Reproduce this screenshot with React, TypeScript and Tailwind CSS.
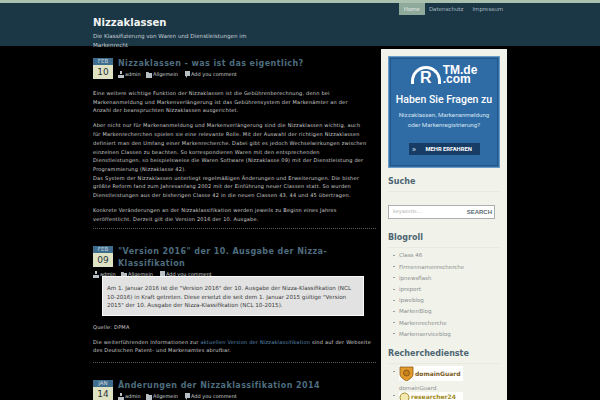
const dv = { fontFamily: '"DejaVu Sans", sans-serif' };

function DateBadge({ month, day }: { month: string; day: string }) {
  return (
    <div className="w-[20px] shrink-0 text-center">
      <div className="h-[7px] bg-[#3f6d8e] text-[5.500px] leading-[7px] text-[#c9d6df]">{month}</div>
      <div className="h-[14px] bg-[#dfe3c4] text-[9px] leading-[14px] text-[#27333a]">{day}</div>
    </div>
  );
}

function Glyph({ kind }: { kind: "user" | "folder" | "comment" }) {
  return (
    <svg width="6" height="7" viewBox="0 0 6 7" className="shrink-0" fill="#b9c0c4">
      {kind === "user" && <path d="M2 0h2v3H2zM0 4h6v3H0z" />}
      {kind === "folder" && <path d="M0 1h2.500l.5 1h3v5H0z" />}
      {kind === "comment" && <path d="M1 0h5v5H3v2L1.500 5H1z" />}
    </svg>
  );
}

function Meta({ className = "" }: { className?: string }) {
  return (
    <div className={`flex items-center text-[5px] leading-[7px] text-[#cfd4d6] ${className}`}>
      <Glyph kind="user" />
      <span className="ml-[1px] w-[21px]">admin</span>
      <Glyph kind="folder" />
      <span className="ml-[1px] w-[31px]">Allgemein</span>
      <Glyph kind="comment" />
      <span className="ml-[1px]">Add you comment</span>
    </div>
  );
}

function P({ children, className = "" }: { children: React.ReactNode; className?: string }) {
  return <p className={`whitespace-nowrap text-[5px] leading-[8.700px] tracking-[0.22px] text-[#cfcfcf] ${className}`}>{children}</p>;
}

function Title({ children }: { children: React.ReactNode }) {
  return <h2 className="text-[8px] font-bold leading-[12px] tracking-[0.42px] text-[#4d6c7e]">{children}</h2>;
}

function Separator() {
  return <div className="border-b border-dotted border-[#5a5a5a]" />;
}

const blogroll = ["Class 46", "Firmennamenrecherche", "ipnewsflash", "ipreport", "ipweblog", "MarkenBlog", "Markenrecherche", "Markenserviceblog"];

function SideHead({ children }: { children: React.ReactNode }) {
  return <h3 className="border-b border-[#e9eae2] pb-[4px] text-[8px] font-bold leading-[10px] text-[#4d6572]">{children}</h3>;
}

export default function App() {
  return (
    <div className="h-[400px] w-[600px] overflow-hidden bg-black" style={dv}>
      <div className="h-[3px] bg-[#a9c1ae]" />
      <header className="flex h-[43px] justify-between bg-[#1b3644] pl-[93px] pr-[97px]">
        <div className="w-[160px] pt-[13px]">
          <h1 className="text-[10.100px] font-bold leading-[13px] text-[#f2f4f4]">Nizzaklassen</h1>
          <p className="mt-[3px] text-[5.600px] leading-[9px] text-[#c4d0d6]">
            Die Klassifizierung von Waren und Dienstleistungen im Markenrecht
          </p>
        </div>
        <nav className="flex h-[12px] items-center text-[5.500px] text-[#a9bcc5]">
          <span className="flex h-full w-[26px] items-center justify-center bg-[#8fa99a] text-[#e4ecea]">Home</span>
          <span className="ml-[4px]">Datenschutz</span>
          <span className="ml-[9px]">Impressum</span>
        </nav>
      </header>

      <div className="flex pl-[93px]">
        <main className="w-[283px] pt-[12px]">
          <article>
            <div className="flex gap-[5px]">
              <DateBadge month="FEB" day="10" />
              <div>
                <Title>Nizzaklassen - was ist das eigentlich?</Title>
                <Meta className="mt-[1px]" />
              </div>
            </div>
            <P className="mt-[10px]">
              Eine weitere wichtige Funktion der Nizzaklassen ist die Gebührenberechnung, denn bei<br />
              Markenanmeldung und Markenverlängerung ist das Gebührensystem der Markenämter an der<br />
              Anzahl der beanspruchten Nizzaklassen ausgerichtet.
            </P>
            <P className="mt-[6.300px]">
              Aber nicht nur für Markenanmeldung und Markenverlängerung sind die Nizzaklassen wichtig, auch<br />
              für Markenrecherchen spielen sie eine relevante Rolle. Mit der Auswahl der richtigen Nizzaklassen<br />
              definiert man den Umfang einer Markenrecherche. Dabei gibt es jedoch Wechselwirkungen zwischen<br />
              einzelnen Classen zu beachten. So korrespondieren Waren mit den entsprechenden<br />
              Dienstleistungen, so beispielsweise die Waren Software (Nizzaklasse 09) mit der Dienstleistung der<br />
              Programmierung (Nizzaklasse 42).<br />
              Das System der Nizzaklassen unterliegt regelmäßigen Änderungen und Erweiterungen. Die bisher<br />
              größte Reform fand zum Jahresanfang 2002 mit der Einführung neuer Classen statt. So wurden<br />
              Dienstleistungen aus der bisherigen Classe 42 in die neuen Classen 43, 44 und 45 übertragen.
            </P>
            <P className="mt-[6.300px]">
              Konkrete Veränderungen an der Nizzaklassifikation werden jeweils zu Beginn eines Jahres<br />
              veröffentlicht. Derzeit gilt die Version 2016 der 10. Ausgabe.
            </P>
            <div className="mt-[5px]"><Separator /></div>
          </article>

          <article className="mt-[17px]">
            <div className="flex gap-[5px]">
              <DateBadge month="FEB" day="09" />
              <div className="w-[240px]">
                <Title>"Version 2016" der 10. Ausgabe der Nizza-Klassifikation</Title>
              </div>
            </div>
            <Meta className="mt-[1px]" />
            <blockquote className="relative ml-[9px] mt-[-2px] h-[40px] w-[262px] whitespace-nowrap border border-[#fafafa] bg-[#e2e2e2] px-[4px] pt-[6.500px] text-[5.600px] leading-[8.700px] text-[#3c3c3c]">
              Am 1. Januar 2016 ist die "Version 2016" der 10. Ausgabe der Nizza-Klassifikation (NCL<br />
              10-2016) in Kraft getreten. Diese ersetzt die seit dem 1. Januar 2015 gültige "Version<br />
              2015" der 10. Ausgabe der Nizza-Klassifikation (NCL 10-2015).
            </blockquote>
            <P className="mt-[6.300px]">Quelle: DPMA</P>
            <P className="mt-[6.300px]">
              Die weiterführenden Informationen zur <span className="text-[#5d8bb8]">aktuellen Version der Nizzaklassifikation</span> sind auf der Webseite<br />
              des Deutschen Patent- und Markenamtes abrufbar.
            </P>
            <div className="mt-[7px]"><Separator /></div>
          </article>

          <article className="mt-[17px]">
            <div className="flex gap-[5px]">
              <DateBadge month="JAN" day="14" />
              <div>
                <Title>Änderungen der Nizzaklassifikation 2014</Title>
                <Meta className="mt-[1px]" />
              </div>
            </div>
          </article>
        </main>

        <aside className="ml-[5px] mt-[3px] w-[126px] bg-[#f1f2ea] px-[7px] pt-[7px]">
          <div className="flex h-[112px] w-[112px] flex-col items-center border border-[#6f9cc5] bg-[#2f6ca6] outline outline-1 outline-offset-[-3px] outline-[#235a8e]">
            <div className="mt-[9px] flex items-end text-white" style={{ fontFamily: '"Liberation Sans", sans-serif' }}>
              <span className="flex h-[18px] w-[30px] items-end justify-center overflow-hidden rounded-t-full border-[3px] border-b-0 border-white text-[16px] font-bold leading-[13px]">R</span>
              <span className="ml-[2px] text-[12px] font-bold leading-[9px]">
                TM.de<br />.com
              </span>
            </div>
            <p className="mt-[10px] text-[10.500px] font-medium leading-[12px] text-white" style={{ fontFamily: 'Roboto, sans-serif' }}>Haben Sie Fragen zu</p>
            <p className="mt-[4px] text-center text-[6.200px] leading-[10px] text-[#cfe0ef]" style={{ fontFamily: 'Roboto, sans-serif' }}>
              Nizzaklassen, Markenanmeldung<br />oder Markenregistrierung?
            </p>
            <div className="mt-[13px] flex h-[12px] w-[71px] items-center bg-[#173d66] text-[5.800px] font-bold text-white" style={{ fontFamily: 'Roboto, sans-serif' }}>
              <span className="w-[11px] text-center text-[8px] leading-[10px] text-[#b9cde0]">»</span>
              <span className="ml-[6px]">MEHR ERFAHREN</span>
            </div>
          </div>

          <section className="mt-[9px]">
            <SideHead>Suche</SideHead>
            <div className="mt-[13px] flex h-[14px] w-[107px] items-center justify-between border border-[#aab0ae] bg-white pl-[4px] pr-[2px]">
              <span className="text-[5px] text-[#b0b0b0]">keywords...</span>
              <span className="text-[6px] font-bold text-[#5d6b73]" style={{ fontFamily: '"Liberation Sans", sans-serif' }}>SEARCH</span>
            </div>
          </section>

          <section className="mt-[14px]">
            <SideHead>Blogroll</SideHead>
            <ul className="mt-[2px]">
              {blogroll.map((b) => (
                <li key={b} className="flex h-[11.200px] items-center pl-[5px] text-[5.500px] text-[#8b8f8f]">
                  <span className="mr-[4px] h-[1px] w-[2px] bg-[#9a9e9e]" />
                  {b}
                </li>
              ))}
            </ul>
          </section>

          <section className="mt-[9px]">
            <SideHead>Recherchedienste</SideHead>
            <div className="mt-[2px] flex pl-[5px]">
              <span className="mr-[4px] mt-[5px] h-[1px] w-[2px] bg-[#9a9e9e]" />
              <div>
                <div className="flex h-[15px] w-[64px] items-center bg-white">
                  <svg width="15" height="15" viewBox="0 0 15 15" className="shrink-0">
                    <path d="M1 1h13v7c0 3-3 5-6.500 7C4 13 1 11 1 8z" fill="#e39a2c" stroke="#8a5a14" strokeWidth="0.800" />
                    <circle cx="7.500" cy="7" r="3" fill="#c8801c" stroke="#5a3a0c" strokeWidth="0.600" />
                  </svg>
                  <span className="ml-[1px] text-[6px] font-bold text-[#7a5a22]">domainGuard</span>
                </div>
                <div className="mt-[3px] text-[5.500px] leading-[8px] text-[#8b8f8f]">domainGuard</div>
              </div>
            </div>
            <div className="flex pl-[5px]">
              <span className="mr-[4px] mt-[3px] h-[1px] w-[2px] bg-[#9a9e9e]" />
              <div className="flex h-[15px] w-[64px] items-start bg-white">
                <svg width="11" height="11" viewBox="0 0 11 11" className="shrink-0">
                  <circle cx="5.500" cy="5.500" r="4.500" fill="#f3e9b0" stroke="#a08a20" strokeWidth="1" />
                </svg>
                <span className="ml-[1px] text-[6px] font-bold text-[#a08a20]">researcher24</span>
              </div>
            </div>
          </section>
        </aside>
      </div>
    </div>
  );
}
